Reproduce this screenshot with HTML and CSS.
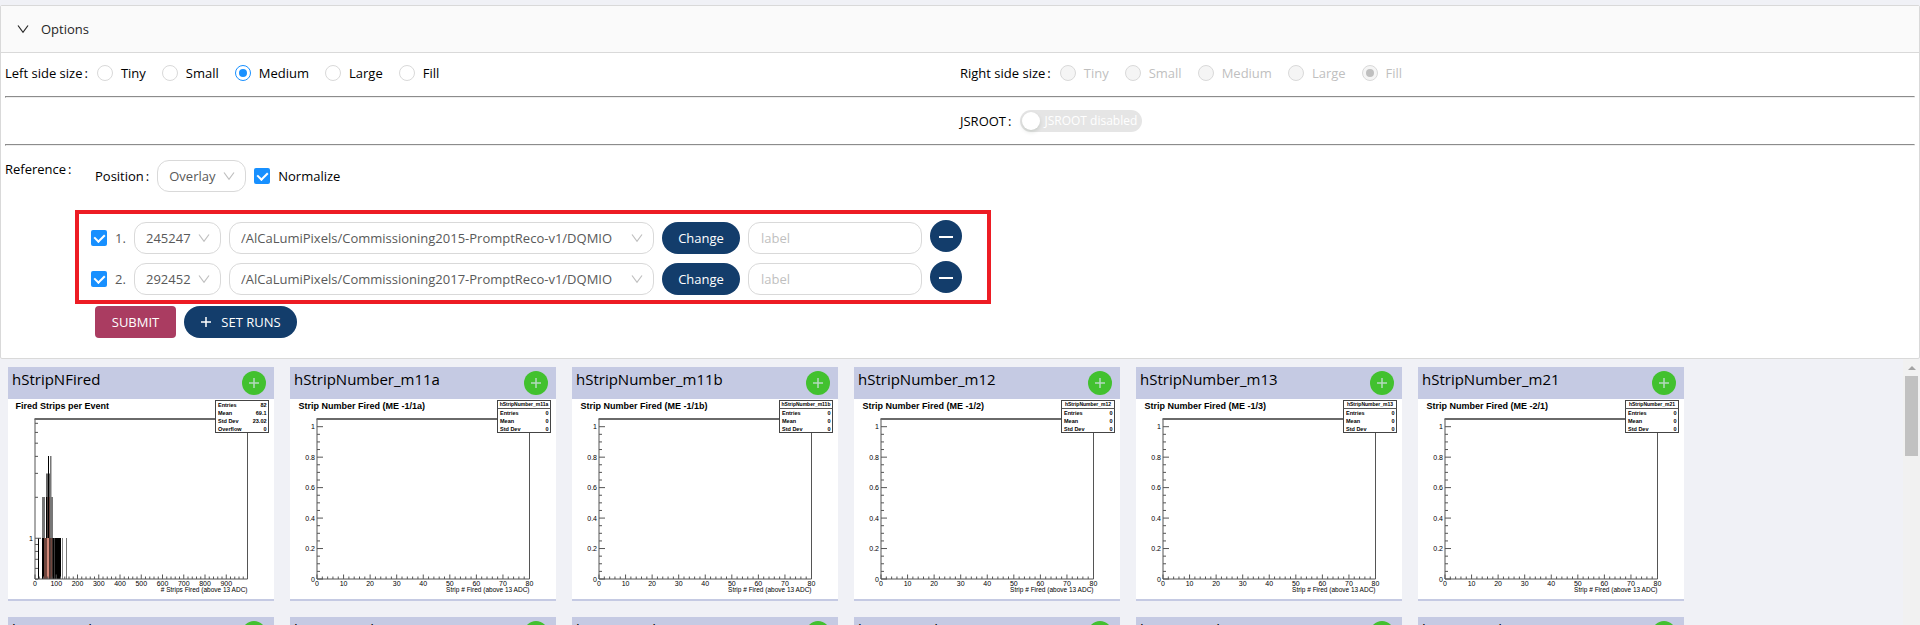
FILE: index.html
```html
<!DOCTYPE html>
<html lang="en">
<head>
<meta charset="utf-8">
<title>DQM plots</title>
<link rel="stylesheet" href="styles.css">
</head>
<body>
<svg class="defs" aria-hidden="true">
  <symbol id="i-down" viewBox="0 0 12 12"><path d="M1 2.5 6 9.3 11 2.5" fill="none" stroke="currentColor" stroke-width="1.2"/></symbol>
  <symbol id="i-plus" viewBox="0 0 12 12"><path d="M6 1v10M1 6h10" fill="none" stroke="currentColor" stroke-width="1.5"/></symbol>
  <symbol id="i-minus" viewBox="0 0 14 14"><path d="M0 8h14" fill="none" stroke="currentColor" stroke-width="2"/></symbol>
</svg>

<section class="panel">
  <button class="panel-head" type="button" aria-expanded="true">
    <svg class="ico"><use href="#i-down"/></svg>Options
  </button>
  <div class="panel-body">
    <div class="row">
      <div class="half">
        <span class="caption">Left side size<i>:</i></span>
        <div class="radios">
          <label><input type="radio" name="left">Tiny</label>
          <label><input type="radio" name="left">Small</label>
          <label><input type="radio" name="left" checked>Medium</label>
          <label><input type="radio" name="left">Large</label>
          <label><input type="radio" name="left">Fill</label>
        </div>
      </div>
      <div class="half">
        <span class="caption">Right side size<i>:</i></span>
        <div class="radios">
          <label><input type="radio" name="right" disabled>Tiny</label>
          <label><input type="radio" name="right" disabled>Small</label>
          <label><input type="radio" name="right" disabled>Medium</label>
          <label><input type="radio" name="right" disabled>Large</label>
          <label><input type="radio" name="right" disabled checked>Fill</label>
        </div>
      </div>
    </div>
    <hr>
    <div class="row">
      <div class="half"></div>
      <div class="half">
        <span class="caption">JSROOT<i>:</i></span>
        <button class="switch" type="button" role="switch" aria-checked="false" aria-label="JSROOT" disabled><span class="knob"></span>JSROOT disabled</button>
      </div>
    </div>
    <hr>
    <div class="reference">
      <span class="caption ref-caption">Reference<i>:</i></span>
      <div class="ref-content">
        <div class="position">
          <label class="caption" for="pos">Position<i>:</i></label>
          <span class="select w-pos"><select id="pos"><option>Overlay</option></select><svg class="ico"><use href="#i-down"/></svg></span>
          <label class="check"><input type="checkbox" checked>Normalize</label>
        </div>
        <div class="runs">
          <div class="run">
            <label class="check num"><input type="checkbox" checked>1.</label>
            <span class="select w-run"><select aria-label="Run 1"><option>245247</option></select><svg class="ico"><use href="#i-down"/></svg></span>
            <span class="select w-data"><select aria-label="Dataset 1"><option>/AlCaLumiPixels/Commissioning2015-PromptReco-v1/DQMIO</option></select><svg class="ico"><use href="#i-down"/></svg></span>
            <button class="btn change" type="button">Change</button>
            <input class="text" type="text" placeholder="label" aria-label="Label 1">
            <button class="btn minus" type="button" aria-label="Remove run 1"><svg><use href="#i-minus"/></svg></button>
          </div>
          <div class="run">
            <label class="check num"><input type="checkbox" checked>2.</label>
            <span class="select w-run"><select aria-label="Run 2"><option>292452</option></select><svg class="ico"><use href="#i-down"/></svg></span>
            <span class="select w-data"><select aria-label="Dataset 2"><option>/AlCaLumiPixels/Commissioning2017-PromptReco-v1/DQMIO</option></select><svg class="ico"><use href="#i-down"/></svg></span>
            <button class="btn change" type="button">Change</button>
            <input class="text" type="text" placeholder="label" aria-label="Label 2">
            <button class="btn minus" type="button" aria-label="Remove run 2"><svg><use href="#i-minus"/></svg></button>
          </div>
        </div>
        <div class="actions">
          <button class="btn submit" type="submit">SUBMIT</button>
          <button class="btn setruns" type="button"><svg class="ico"><use href="#i-plus"/></svg>SET RUNS</button>
        </div>
      </div>
    </div>
  </div>
</section>

<main class="results">
  <div class="plots" id="plots"></div>
  <div class="scrollbar" aria-hidden="true"><span class="arrow"></span><span class="thumb"></span></div>
</main>
<script src="plots.js"></script>
</body>
</html>
```
FILE: styles.css
```css
* { box-sizing: border-box; }
html { height: 100%; overflow: hidden; }
body {
  margin: 0;
  height: 100%;
  overflow: hidden;
  display: flex;
  flex-direction: column;
  padding-top: 5px;
  background: #f0f1f6;
  color: #000;
  font: 13px/22px "Open Sans", "Noto Sans", sans-serif;
}
button, input, select { font: inherit; color: inherit; margin: 0; }
.defs { position: absolute; width: 0; height: 0; }
.ico { width: 12px; height: 12px; }

.panel {
  flex: none;
  border: 1px solid #d9d9d9;
  border-radius: 2px;
  background: #fff;
}
.panel-head {
  display: flex;
  align-items: center;
  gap: 12px;
  width: 100%;
  height: 47px;
  padding: 0 16px;
  border: 0;
  border-bottom: 1px solid #d9d9d9;
  background: #fafafa;
  color: #262626;
}
.panel-body { padding: 0 4px 20px; }
.row { display: flex; padding: 7px 0; }
.row:first-child { padding-top: 4px; }
.half { flex: 1; display: flex; align-items: center; gap: 9px; height: 32px; }
hr {
  margin: 0;
  border: 1px solid;
  border-color: #8c8c8c #eee #eee #8c8c8c;
}
.caption { white-space: nowrap; }
.caption i { font-style: normal; margin-left: 2px; }

.radios { display: flex; gap: 16px; }
.radios label, .check { display: flex; align-items: center; gap: 8px; }
input[type="radio"] {
  appearance: none;
  display: grid;
  place-items: center;
  width: 16px;
  height: 16px;
  border: 1px solid #d9d9d9;
  border-radius: 50%;
  background: #fff;
}
input[type="radio"]:checked { border-color: #1890ff; }
input[type="radio"]:checked::after {
  content: "";
  width: 8px;
  height: 8px;
  border-radius: 50%;
  background: #1890ff;
}
input[type="radio"]:disabled { border-color: #d9d9d9; background: #f5f5f5; }
input[type="radio"]:disabled::after { background: #bfbfbf; }
.radios label:has(:disabled) { color: #bfbfbf; }

input[type="checkbox"] {
  appearance: none;
  display: grid;
  place-items: center;
  width: 16px;
  height: 16px;
  border-radius: 2px;
  background: #1890ff;
}
input[type="checkbox"]::after {
  content: "";
  width: 5px;
  height: 8px;
  margin-bottom: 2px;
  border: solid #fff;
  border-width: 0 2px 2px 0;
  transform: rotate(45deg);
}

.switch {
  display: flex;
  align-items: center;
  gap: 4px;
  height: 22px;
  padding: 0 5px 0 2px;
  border: 0;
  border-radius: 11px;
  background: #e5e5e5;
  color: #fff;
  font-size: 12px;
}
.knob {
  width: 18px;
  height: 18px;
  border-radius: 50%;
  background: #fff;
  box-shadow: 0 2px 4px #00230b22;
}

.reference { display: flex; padding-top: 7px; }
.ref-caption { width: 90px; line-height: 32px; }
.ref-content { padding-top: 7px; }
.position { display: flex; align-items: center; gap: 8px; }
.select { position: relative; display: block; height: 32px; }
.select select {
  appearance: none;
  width: 100%;
  height: 32px;
  padding: 0 11px;
  border: 1px solid #d9d9d9;
  border-radius: 12px;
  background: #fff;
  color: #595959;
}
.select .ico {
  position: absolute;
  right: 11px;
  top: 10px;
  color: #bfbfbf;
  pointer-events: none;
}
.w-pos { width: 89px; }
.w-run { width: 87px; }
.w-data { width: 425px; }

.runs {
  display: grid;
  gap: 5px;
  margin: 18px 0 2px -20px;
  padding: 6px 25px 3px 12px;
  border: 4px solid #ed1c24;
}
.run { display: flex; align-items: center; gap: 8px; }
.num { width: 35px; color: #595959; }
.btn {
  display: flex;
  align-items: center;
  justify-content: center;
  height: 32px;
  padding: 0 15px;
  border: 0;
  border-radius: 16px;
  background: #133d6b;
  color: #fff;
}
.change { width: 78px; }
.text {
  width: 174px;
  height: 32px;
  padding: 0 12px;
  border: 1px solid #d9d9d9;
  border-radius: 12px;
  background: #fff;
}
.text::placeholder { color: #bfbfbf; }
.minus { width: 32px; margin-bottom: 4px; padding: 0; border-radius: 50%; }
.minus svg { width: 14px; height: 14px; }
.actions { display: flex; gap: 8px; }
.submit { width: 81px; border-radius: 4px; background: #aa3c61; }
.setruns { width: 113px; gap: 9px; }

.results { flex: 1; min-height: 0; display: flex; }
.plots {
  flex: 1;
  display: flex;
  flex-wrap: wrap;
  align-content: flex-start;
  gap: 16px;
  padding: 8px 200px 0 8px;
  overflow: hidden;
}
.plot { flex: none; width: 266px; border-bottom: 2px solid #c5cae3; background: #fff; }
.plot-head {
  display: flex;
  justify-content: space-between;
  height: 32px;
  padding: 0 8px 0 4px;
  background: #c5cae3;
}
.plot-title { margin: 0; font-size: 15px; font-weight: 400; line-height: 24px; }
.add {
  display: grid;
  place-items: center;
  align-self: center;
  width: 24px;
  height: 24px;
  padding: 0;
  border: 0;
  border-radius: 50%;
  background: #42c12f;
  color: #b5d9c0;
}
.chart {
  display: block;
  width: 100%;
  height: 200px;
  font-family: "Liberation Sans", Arial, sans-serif;
  font-size: 13px;
}
.chart .tick { font-size: 14px; }
.chart .title { font-size: 18px; font-weight: 700; }
.chart .stat { font-size: 11px; font-weight: 700; }
.chart .stat-name { font-size: 10px; font-weight: 700; }
.chart .end { text-anchor: end; }
.chart .mid { text-anchor: middle; }
.chart .line { fill: none; stroke: #555; stroke-width: 2; }
.chart .top { stroke: #6a6a6a; stroke-width: 4; }
.chart .box { fill: #fff; stroke: #444; stroke-width: 2; }

.scrollbar {
  flex: none;
  display: flex;
  flex-direction: column;
  align-items: center;
  width: 17px;
  padding-top: 7px;
  background: #f1f1f1;
}
.arrow { border: 4px solid transparent; border-top: 0; border-bottom-color: #a3a3a3; }
.thumb { width: 13px; height: 80px; margin-top: 6px; background: #c1c1c1; }
```
FILE: plots.js
```js
const LEFT = 54, RIGHT = 479, TOP = 40, BOTTOM = 360;
const plots = [
  { name: 'hStripNFired', fired: true },
  { name: 'hStripNumber_m11a', ring: '-1/1a' },
  { name: 'hStripNumber_m11b', ring: '-1/1b' },
  { name: 'hStripNumber_m12', ring: '-1/2' },
  { name: 'hStripNumber_m13', ring: '-1/3' },
  { name: 'hStripNumber_m21', ring: '-2/1' },
  { name: 'hStripNumber_m22', ring: '-2/2' },
  { name: 'hStripNumber_m31', ring: '-3/1' },
  { name: 'hStripNumber_m32', ring: '-3/2' },
  { name: 'hStripNumber_m41', ring: '-4/1' },
  { name: 'hStripNumber_m42', ring: '-4/2' },
  { name: 'hStripNumber_p11a', ring: '+1/1a' }
];
const text = (x, y, s, cls = '') => `<text x="${x}" y="${y}" class="${cls}">${s}</text>`;

function xAxis(divisions, perMajor, step, labels) {
  let d = '', out = '';
  for (let i = 0; i <= divisions; i++) {
    const x = LEFT + (RIGHT - LEFT) * i / divisions;
    const major = i % perMajor === 0;
    d += `M${x} ${BOTTOM}v${major ? -9 : -5}`;
    if (major && i / perMajor < labels) out += text(x, 373, i / perMajor * step, 'tick mid');
  }
  return `<path class="line" d="${d}"/>` + out;
}

function linearY() {
  let d = '', out = '';
  for (let i = 0; i <= 20; i++) {
    const y = BOTTOM - 15.23 * i;
    d += `M${LEFT} ${y}h${i % 4 ? 6 : 12}`;
    if (i % 4 === 0) out += text(50, y + 5, i / 20, 'tick end');
  }
  return `<path class="line" d="${d}"/>` + out;
}

function logY() {
  let d = '';
  for (const v of [0.5, 0.6, 0.7, 0.8, 0.9, 1, 2, 3, 4, 5, 6, 7]) {
    const y = 278.5 - 272 * Math.log10(v);
    d += `M${LEFT} ${y}h${v === 1 ? 12 : 6}`;
  }
  return `<path class="line" d="${d}"/>` + text(50, 283, 1, 'tick end');
}

// Each bar: x, top, width, colour
const bars = [
  [60, 278, 2, '#000'],
  [68, 278, 38, '#000'],
  [68, 196, 6, '#777'],
  [76, 149, 8, '#666'],
  [76, 196, 3, '#000'],
  [79, 196, 6, '#6b4942'],
  [80, 114, 2, '#000'],
  [84, 114, 3, '#777'],
  [84, 196, 6, '#777'],
  [68, 278, 4, '#000'],
  [72, 278, 6, '#70463e'],
  [78, 278, 5, '#d48a7a'],
  [83, 278, 2, '#000'],
  [85, 278, 4, '#70463e'],
  [89, 278, 2, '#000'],
  [92, 278, 1, '#777'],
  [108, 278, 2, '#888'],
  [116, 278, 2, '#777']
];
const histogram = () => bars.map(([x, y, w, c]) =>
  `<rect x="${x}" y="${y}" width="${w}" height="${BOTTOM - y}" fill="${c}"/>`).join('');

function stats(p) {
  const rows = p.fired
    ? [['Entries', '82'], ['Mean', '69.1'], ['Std Dev', '23.02'], ['Overflow', '0']]
    : [['Entries', '0'], ['Mean', '0'], ['Std Dev', '0']];
  let out = '<rect class="box" x="415" y="3" width="106" height="64"/>';
  if (!p.fired) out += '<path class="line" d="M415 19h106"/>' + text(468, 14, p.name, 'stat-name mid');
  rows.forEach(([k, v], i) => {
    const y = (p.fired ? 15 : 31) + 16 * i;
    out += text(420, y, k, 'stat') + text(517, y, v, 'stat end');
  });
  return out;
}

function chart(p) {
  const title = p.fired ? 'Fired Strips per Event' : `Strip Number Fired (ME ${p.ring})`;
  const label = p.fired ? '# Strips Fired (above 13 ADC)' : 'Strip # Fired (above 13 ADC)';
  return `<svg class="chart" viewBox="0 0 532 400" role="img" aria-label="${title}">
    ${p.fired ? histogram() : ''}
    <path class="line" d="M${LEFT} ${TOP}V${BOTTOM}H${RIGHT}V${TOP}"/>
    <path class="line top" d="M${LEFT - 1} ${TOP}H${RIGHT + 1}"/>
    ${p.fired ? xAxis(50, 5, 100, 10) + logY() : xAxis(40, 5, 10, 9) + linearY()}
    ${text(p.fired ? 15 : 17, 20, title, 'title')}
    ${text(RIGHT, 385, label, 'end')}
    ${stats(p)}</svg>`;
}

document.getElementById('plots').innerHTML = plots.map(p => `
  <article class="plot">
    <header class="plot-head">
      <h2 class="plot-title">${p.name}</h2>
      <button class="add" type="button" aria-label="Add ${p.name}"><svg class="ico"><use href="#i-plus"/></svg></button>
    </header>
    ${chart(p)}
  </article>`).join('');
```
